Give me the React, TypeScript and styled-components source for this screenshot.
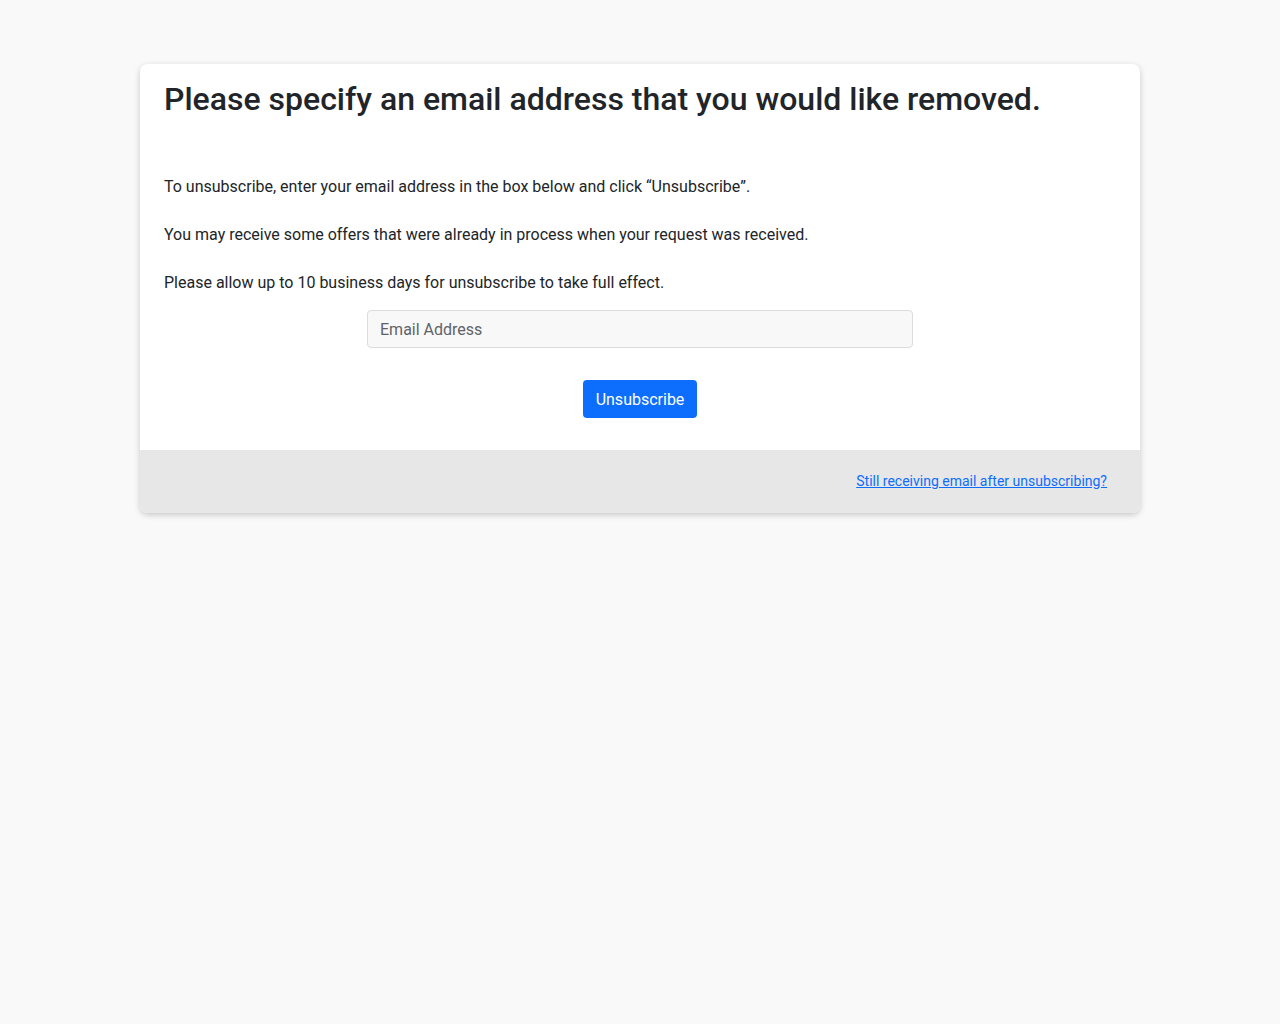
import { ReactElement } from "react";
import styled, { createGlobalStyle } from "styled-components";

const GlobalStyle = createGlobalStyle`
  body {
    margin: 0;
    background: #f9f9f9;
    font-family: Roboto, "Liberation Sans", sans-serif;
    color: #212529;
  }
`;

const Page = styled.div`
  padding: 64px 140px;
`;

const Card = styled.div`
  background: #ffffff;
  border-radius: 8px;
  box-shadow: 0 2px 6px rgba(0, 0, 0, 0.2);
  overflow: hidden;
`;

const CardBody = styled.div`
  display: flex;
  flex-direction: column;
  padding: 16px 24px 32px;
`;

const Title = styled.h2`
  margin: 0 0 57px;
  font-size: 32px;
  font-weight: 500;
  line-height: 38px;
`;

const Text = styled.p`
  margin: 0 0 24px;
  font-size: 16px;
  line-height: 24px;

  &:last-of-type {
    margin-bottom: 15px;
  }
`;

const EmailInput = styled.input`
  align-self: center;
  box-sizing: border-box;
  width: 546px;
  height: 38px;
  padding: 6px 12px;
  border: 1px solid #dcdcdc;
  border-radius: 4px;
  background: #f8f8f8;
  font-family: inherit;
  font-size: 16px;
  color: #212529;
  outline: none;

  &::placeholder {
    color: #5f6368;
  }
`;

const SubmitButton = styled.button`
  align-self: center;
  margin-top: 32px;
  height: 38px;
  padding: 0 13px;
  border: none;
  border-radius: 4px;
  background: #0d6efd;
  color: #ffffff;
  font-family: inherit;
  font-size: 16px;
  cursor: pointer;
`;

const CardFooter = styled.div`
  display: flex;
  justify-content: flex-end;
  align-items: center;
  height: 63px;
  padding: 0 33px 2px;
  box-sizing: border-box;
  background: #e7e7e7;
`;

const HelpLink = styled.a`
  color: #0d6efd;
  font-size: 14px;
  text-decoration: underline;
`;

export default function App(): ReactElement {
  return (
    <>
      <GlobalStyle />
      <Page>
        <Card>
          <CardBody as="form" onSubmit={(e) => e.preventDefault()}>
            <Title>Please specify an email address that you would like removed.</Title>
            <Text>
              To unsubscribe, enter your email address in the box below and click
              “Unsubscribe”.
            </Text>
            <Text>
              You may receive some offers that were already in process when your
              request was received.
            </Text>
            <Text>Please allow up to 10 business days for unsubscribe to take full effect.</Text>
            <EmailInput type="email" name="email" placeholder="Email Address" />
            <SubmitButton type="submit">Unsubscribe</SubmitButton>
          </CardBody>
          <CardFooter>
            <HelpLink href="#">Still receiving email after unsubscribing?</HelpLink>
          </CardFooter>
        </Card>
      </Page>
    </>
  );
}
